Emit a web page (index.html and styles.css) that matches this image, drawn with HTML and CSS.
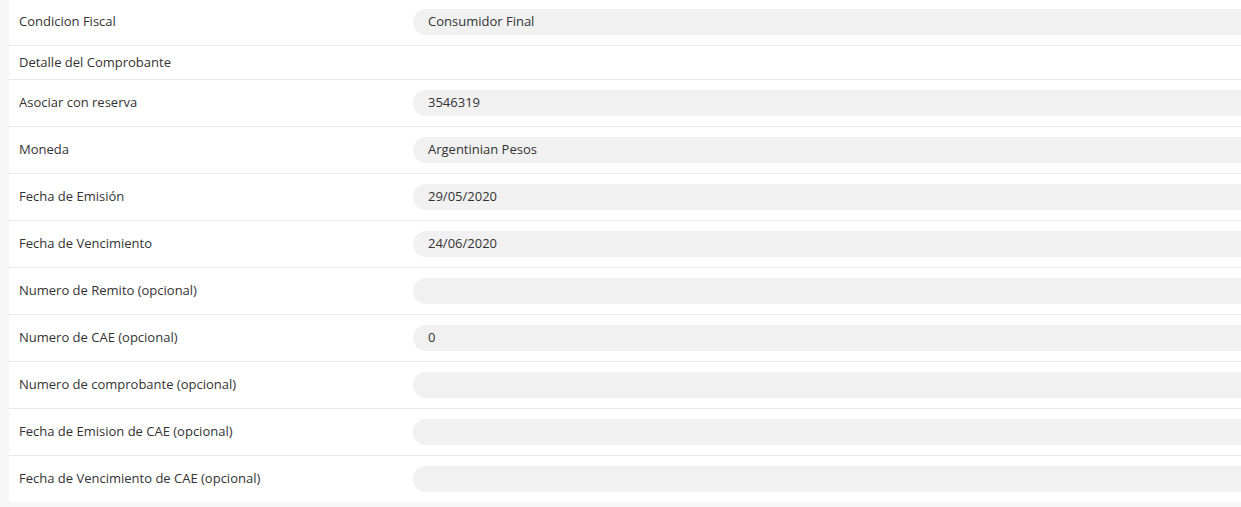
FILE: index.html
```html
<!DOCTYPE html>
<html lang="es">
<head>
  <meta charset="UTF-8" />
  <meta name="viewport" content="width=device-width, initial-scale=1.0"/>
  <title>Detalle del Comprobante</title>
  <link rel="stylesheet" href="styles.css">
</head>
<body>
  <div class="card">
    <div class="row first">
      <label>Condicion Fiscal</label>
      <div class="field">Consumidor Final</div>
    </div>
    <div class="row section">
      <label>Detalle del Comprobante</label>
    </div>
    <div class="row">
      <label>Asociar con reserva</label>
      <div class="field">3546319</div>
    </div>
    <div class="row">
      <label>Moneda</label>
      <div class="field">Argentinian Pesos</div>
    </div>
    <div class="row">
      <label>Fecha de Emisión</label>
      <div class="field">29/05/2020</div>
    </div>
    <div class="row">
      <label>Fecha de Vencimiento</label>
      <div class="field">24/06/2020</div>
    </div>
    <div class="row">
      <label>Numero de Remito (opcional)</label>
      <div class="field"></div>
    </div>
    <div class="row">
      <label>Numero de CAE (opcional)</label>
      <div class="field">0</div>
    </div>
    <div class="row">
      <label>Numero de comprobante (opcional)</label>
      <div class="field"></div>
    </div>
    <div class="row">
      <label>Fecha de Emision de CAE (opcional)</label>
      <div class="field"></div>
    </div>
    <div class="row last">
      <label>Fecha de Vencimiento de CAE (opcional)</label>
      <div class="field"></div>
    </div>
  </div>
</body>
</html>
```

FILE: styles.css
```css
* { box-sizing: border-box; }
body {
  font-family: 'Open Sans', sans-serif;
  font-size: 13px;
  margin: 0;
  padding: 0 0 0 9px;
  background: #f7f7f7;
  color: #333;
  overflow: hidden;
}
.card {
  width: 1400px;
  background: #fff;
}
.row {
  display: grid;
  grid-template-columns: 404px 1fr;
  align-items: center;
  padding: 10px 0;
  border-bottom: 1px solid #e9e9e9;
}
.row.first {
  padding-top: 9px;
}
.row.section {
  padding: 0;
  height: 34px;
}
.row.last {
  border-bottom: none;
}
.row label {
  padding-left: 10px;
  padding-bottom: 2px;
  line-height: 18px;
}
.field {
  height: 26px;
  line-height: 24px;
  padding: 0 15px 2px;
  background: #f1f1f2;
  border-radius: 13px;
}
```
